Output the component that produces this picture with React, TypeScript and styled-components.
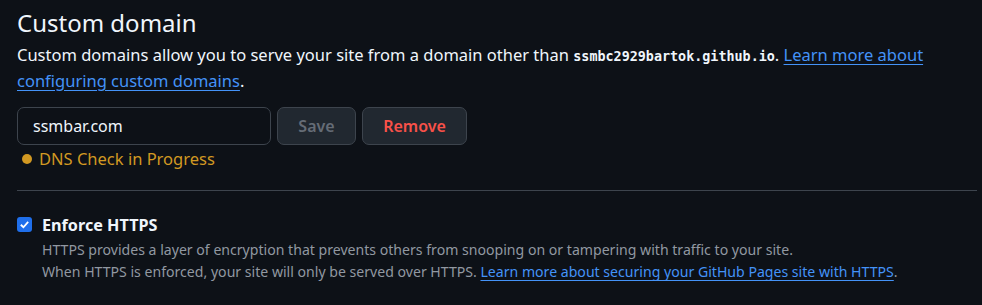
import React from "react";
import styled, { createGlobalStyle } from "styled-components";

const Global = createGlobalStyle`
  html, body { margin: 0; padding: 0; background: #0d1117; }
  body { font-family: "Noto Sans", "Open Sans", sans-serif; color: #f0f6fc; }
  * { box-sizing: border-box; }
`;

const Page = styled.div`
  width: 982px;
  height: 305px;
  padding: 5px 5px 0 17px;
  background: #0d1117;
  overflow: hidden;
`;

const Title = styled.h2`
  margin: 0;
  font-size: 24px;
  font-weight: 400;
  line-height: 36px;
  color: #f0f6fc;
`;

const Desc = styled.p`
  margin: 2px 0 0;
  font-size: 16.5px;
  line-height: 24px;
  color: #f0f6fc;
`;

const Code = styled.code`
  font-family: "DejaVu Sans Mono", "Liberation Mono", monospace;
  font-size: 13.4px;
  font-weight: 600;
`;

const Link = styled.a`
  color: #4493f8;
  text-decoration: underline;
  text-underline-offset: 3px;
`;

const FormRow = styled.div`
  display: flex;
  gap: 6px;
  margin-top: 14px;
`;

const Input = styled.div`
  width: 254px;
  height: 38px;
  border: 1px solid #3d444d;
  border-radius: 7px;
  background: #0d1117;
  padding: 0 15px;
  display: flex;
  align-items: center;
  font-size: 16px;
  color: #f0f6fc;
`;

const Button = styled.button<{ $danger?: boolean; $w: number }>`
  width: ${(p) => p.$w}px;
  height: 38px;
  border: 1px solid #3d444d;
  border-radius: 7px;
  background: #212830;
  font-family: inherit;
  font-size: 16px;
  font-weight: 600;
  color: ${(p) => (p.$danger ? "#f85149" : "#656c76")};
  padding: 0;
`;

const Status = styled.div`
  display: flex;
  align-items: center;
  gap: 7px;
  margin-top: 2px;
  padding-left: 5px;
  font-size: 16.5px;
  line-height: 24px;
  color: #d29922;
`;

const Dot = styled.span`
  width: 10px;
  height: 10px;
  border-radius: 50%;
  background: #d29922;
`;

const Divider = styled.hr`
  margin: 19px 0 0;
  width: 960px;
  border: 0;
  border-top: 1px solid #3d444d;
`;

const CheckRow = styled.div`
  display: flex;
  gap: 10px;
  margin-top: 24px;
`;

const Box = styled.span`
  width: 15px;
  height: 15px;
  margin-top: 2px;
  border-radius: 3px;
  background: #1f6feb;
  display: flex;
  align-items: center;
  justify-content: center;
  flex-shrink: 0;
`;

const CheckBody = styled.div`
  display: flex;
  flex-direction: column;
`;

const CheckLabel = styled.div`
  font-size: 16.2px;
  font-weight: 700;
  line-height: 20px;
  color: #f0f6fc;
`;

const Note = styled.div`
  margin-top: 4px;
  font-size: 14.1px;
  line-height: 22px;
  color: #9198a1;
`;

export default function App() {
  return (
    <>
      <Global />
      <Page>
        <Title>Custom domain</Title>
        <Desc>
          Custom domains allow you to serve your site from a domain other than{" "}
          <Code>ssmbc2929bartok.github.io</Code>. <Link>Learn more about configuring custom domains</Link>.
        </Desc>
        <FormRow>
          <Input>ssmbar.com</Input>
          <Button $w={79}>Save</Button>
          <Button $w={105} $danger>Remove</Button>
        </FormRow>
        <Status>
          <Dot />
          DNS Check in Progress
        </Status>
        <Divider />
        <CheckRow>
          <Box>
            <svg width="11" height="11" viewBox="0 0 12 12">
              <path d="M2 6.3 L4.8 9 L10 3.2" fill="none" stroke="#fff" strokeWidth="2" />
            </svg>
          </Box>
          <CheckBody>
            <CheckLabel>Enforce HTTPS</CheckLabel>
            <Note>
              HTTPS provides a layer of encryption that prevents others from snooping on or tampering with traffic to your site.
              <br />
              When HTTPS is enforced, your site will only be served over HTTPS.{" "}
              <Link>Learn more about securing your GitHub Pages site with HTTPS</Link>.
            </Note>
          </CheckBody>
        </CheckRow>
      </Page>
    </>
  );
}
